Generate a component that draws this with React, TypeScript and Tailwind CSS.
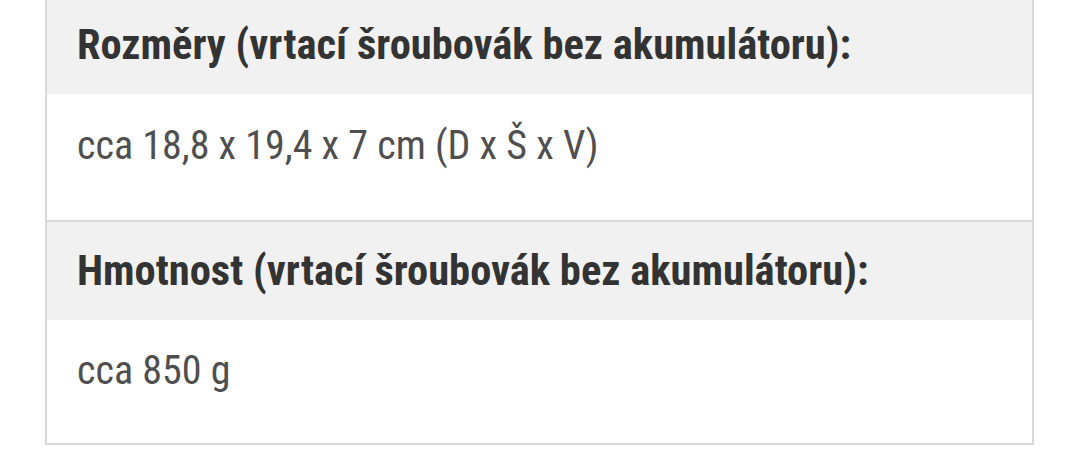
const ROWS = [
  {
    label: 'Rozměry (vrtací šroubovák bez akumulátoru):',
    value: 'cca 18,8 x 19,4 x 7 cm (D x Š x V)',
    valueClass: 'h-[128px] pt-[28px] border-b-2 border-[#d9d9d9]',
  },
  {
    label: 'Hmotnost (vrtací šroubovák bez akumulátoru):',
    value: 'cca 850 g',
    valueClass: 'h-[123px] pt-[27px]',
  },
]

export default function App() {
  return (
    <div className="w-[1076px] h-[450px] overflow-hidden bg-white font-['Roboto_Condensed','Liberation_Sans',sans-serif]">
      <div className="ml-[45px] -mt-[6px] w-[989px] border-2 border-[#d9d9d9]">
        {ROWS.map((row) => (
          <div key={row.label}>
            <div className="h-[98px] pt-[25px] bg-[#f1f1f1] pl-[30px] text-[42.5px] leading-[48px] font-bold text-[#333333]">
              {row.label}
            </div>
            <div className={`pl-[30px] text-[40px] leading-[48px] text-[#4f4f4f] ${row.valueClass}`}>
              {row.value}
            </div>
          </div>
        ))}
      </div>
    </div>
  )
}
